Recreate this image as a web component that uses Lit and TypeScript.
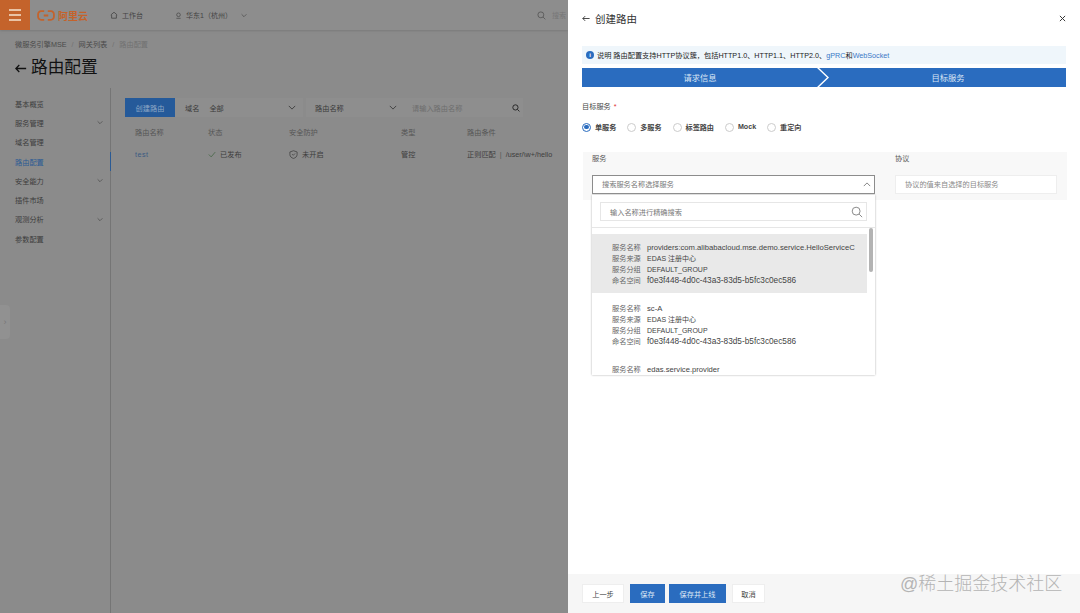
import { LitElement, css, html, svg } from 'lit'
import { customElement } from 'lit/decorators.js'

const chevron = (up = false) => html`<svg class="chev" viewBox="0 0 10 6" width="8" height="5">
  <path d=${up ? 'M1 5l4-4 4 4' : 'M1 1l4 4 4-4'} fill="none" stroke="currentColor" stroke-width="1.1" />
</svg>`

const search = (size: number, width: number) => html`<svg viewBox="0 0 14 14" width=${size} height=${size}>
  <circle cx="6" cy="6" r="4.6" fill="none" stroke="currentColor" stroke-width=${width} />
  ${svg`<path d="M9.5 9.5l3.5 3.5" stroke="currentColor" stroke-width=${width} />`}
</svg>`

const navItems = [
  { name: '基本概览' },
  { name: '服务管理', more: true },
  { name: '域名管理' },
  { name: '路由配置', active: true },
  { name: '安全能力', more: true },
  { name: '插件市场' },
  { name: '观测分析', more: true },
  { name: '参数配置' },
]

const services = [
  { name: 'providers:com.alibabacloud.mse.demo.service.HelloServiceC', hover: true },
  { name: 'sc-A' },
]

@customElement('app-root')
export class AppRoot extends LitElement {
  static styles = css`
    :host {
      display: block;
      width: 1080px;
      height: 613px;
      overflow: hidden;
      position: relative;
      font-family: 'Liberation Sans', 'Noto Sans CJK SC', sans-serif;
    }
    .shell { display: flex; height: 613px; }

    /* dimmed console behind the drawer */
    .page { width: 568px; flex: none; background: #8b8b8b; color: #3a3a3a; display: flex; flex-direction: column; position: relative; overflow: hidden; }
    .topbar { height: 30px; flex: none; display: flex; align-items: center; background: #8d8d8d; box-shadow: 0 1px 2px #7a7a7a; font-size: 7px; color: #444; }
    .burger { width: 30px; height: 30px; background: #c4632b; display: flex; flex-direction: column; justify-content: center; gap: 3px; align-items: center; }
    .burger i { width: 12px; height: 2px; background: #e9c3a5; display: block; }
    .logo { margin-left: 7px; display: flex; align-items: center; gap: 3px; color: #c4632b; font-size: 10px; font-weight: 700; width: 73px; }
    .nav-pill { display: flex; align-items: center; gap: 4px; }
    .work { width: 65px; }
    .region { width: 362px; }
    .region .chev { margin-left: 5px; width: 6px; }
    .top-search { display: flex; align-items: center; gap: 6px; color: #555; }
    .top-search span { color: #777; }

    .crumbs { margin: 9px 0 0 15px; font-size: 7.2px; line-height: 11px; color: #4a4a4a; display: flex; gap: 5px; }
    .crumbs .sep, .crumbs .last { color: #717171; }
    .title { margin: 6px 0 0 15px; display: flex; align-items: center; gap: 4px; font-size: 16.7px; line-height: 24px; color: #111; }

    .body { flex: 1; display: flex; margin-top: 8px; }
    .side { width: 110px; flex: none; border-right: 1px solid #757575; padding-top: 6px; }
    .side a { height: 19.3px; padding: 0 7px 0 15px; display: flex; align-items: center; justify-content: space-between; font-size: 7.2px; color: #3c3c3c; position: relative; }
    .side a.active { color: #2a5a94; }
    .side a.active::after { content: ''; position: absolute; right: -1px; top: 0; bottom: 0; width: 1.5px; background: #2a5a94; }
    .side .chev { color: #444; width: 6px; }
    .tab { position: absolute; left: 0; top: 305px; width: 10px; height: 34px; background: #919191; border-radius: 0 4px 4px 0; color: #777; font-size: 9px; display: flex; align-items: center; justify-content: center; }

    .main { flex: 1; padding: 10px 0 0 14px; font-size: 7.2px; }
    .toolbar { display: flex; height: 19px; }
    .primary { width: 50px; background: #255a9a; color: #8fa9c6; display: flex; align-items: center; justify-content: center; }
    .field { background: #8e8e8e; display: flex; align-items: center; justify-content: space-between; box-sizing: border-box; }
    .f-domain { width: 128px; margin-right: 3px; padding: 0 7px 0 10px; }
    .f-domain b { font-weight: 400; margin-right: 10px; }
    .f-name { width: 96px; padding: 0 5px 0 9px; }
    .f-input { width: 121px; padding: 0 3px 0 10px; color: #6d6d6d; }
    .f-input svg { color: #222; }
    .field span { display: flex; }
    .thead, .trow { display: grid; grid-template-columns: 73px 81px 112px 66px auto; padding-left: 10px; align-items: center; }
    .thead { height: 23px; margin-top: 3px; color: #555; }
    .trow { height: 22px; color: #3d3d3d; }
    .trow .link { color: #3a5a82; letter-spacing: .5px; }
    .cell { display: flex; align-items: center; gap: 4px; white-space: nowrap; }
    .cell i { font-style: normal; color: #555; }

    /* drawer */
    .drawer { flex: 1; background: #fff; color: #333; display: flex; flex-direction: column; font-size: 7.2px; }
    .d-head { height: 36px; flex: none; padding: 0 14px; display: flex; align-items: center; justify-content: space-between; font-size: 10.5px; color: #333; }
    .d-head div { display: flex; align-items: center; gap: 5px; }
    .alert { margin: 10px 14px 0; height: 18px; background: #eff6fb; display: flex; align-items: center; gap: 3px; padding-left: 4px; color: #222; font-size: 7.2px; white-space: nowrap; }
    .alert .dot { width: 8px; height: 8px; border-radius: 50%; background: #2a6cbf; color: #fff; font-size: 6px; line-height: 8px; text-align: center; font-weight: 700; }
    .alert em { font-style: normal; color: #3a78c6; }
    .steps { margin: 4px 14px 0; height: 19px; display: flex; background: #2a6cbf; color: #d9e6f5; font-size: 8.3px; position: relative; }
    .steps span { display: flex; align-items: center; justify-content: center; padding-bottom: 1px; box-sizing: border-box; }
    .steps .one { width: 236px; }
    .steps .two { flex: 1; padding-left: 12px; }
    .steps svg { position: absolute; left: 234px; top: 0; }
    .target { margin: 15px 14px 0; line-height: 10px; font-size: 7.2px; color: #444; }
    .target i { color: #d33; font-style: normal; margin-left: 3px; }
    .radios { margin: 10px 14px 0 0; padding-left: 14px; display: flex; height: 10px; align-items: center; font-size: 7.1px; font-weight: 700; color: #444; }
    .radio { display: flex; align-items: center; gap: 4px; margin-right: 11px; }
    .radio u { width: 7px; height: 7px; border: 1px solid #ccc; border-radius: 50%; display: block; }
    .radio.on u { border-color: #2a6cbf; position: relative; }
    .radio.on u::after { content: ''; position: absolute; inset: 1.2px; border-radius: 50%; background: #2a6cbf; }

    .svc { margin: 20px 13px 0 15px; height: 48px; background: #f8f8f8; padding: 0 10px 0 9px; position: relative; display: grid; grid-template-columns: 283px 162px; column-gap: 20px; grid-template-rows: 23px 19px; color: #555; align-items: center; }
    .head { align-self: start; line-height: 14px; }
    .picker { height: 19px; box-sizing: border-box; background: #fff; border: 1px solid #8c8c8c; padding: 0 3px 1px 9px; display: flex; align-items: center; justify-content: space-between; color: #777; }
    .proto { height: 19px; box-sizing: border-box; background: #fff; border: 1px solid #eee; padding: 0 9px 1px; display: flex; align-items: center; color: #888; }
    .drop { position: absolute; left: 9px; top: 43px; width: 283px; height: 180px; box-sizing: border-box; background: #fff; box-shadow: 0 0 2px #aaa; overflow: hidden; z-index: 2; }
    .drop-search { margin: 7px 8px 0; height: 19px; border: 1px solid #e6e6e6; display: flex; align-items: center; justify-content: space-between; padding: 0 3px 0 9px; color: #777; box-sizing: border-box; }
    .drop-search svg { color: #777; }
    .list { margin-top: 6px; border-top: 1px solid #e6e6e6; padding-top: 6px; position: relative; padding-right: 8px; }
    .bar { position: absolute; right: 2px; top: 0; width: 4px; height: 44px; background: #b3b3b3; border-radius: 2px; }
    .item { padding: 7.5px 0 7.5px 20px; margin-bottom: 2px; line-height: 11px; color: #444; }
    .item.hover { background: #e9e9e9; }
    .line { display: flex; gap: 6px; white-space: nowrap; align-items: baseline; font-size: 7.65px; }
    .line b { font-weight: 400; font-size: 7.2px; color: #666; width: 29px; flex: none; }
    .line.group { font-size: 7px; }
    .line.uuid { font-size: 8.25px; }

    .spacer { flex: 1; }
    .d-foot { height: 39px; flex: none; background: #f6f6f6; padding: 0 14px; display: flex; align-items: center; gap: 5px; position: relative; }
    .btn { height: 19px; display: flex; align-items: center; justify-content: center; background: #fff; border: 1px solid #eee; box-sizing: border-box; color: #444; }
    .btn.blue { background: #2a6cbf; border-color: #2a6cbf; color: #dfe9f5; }
    .mark { position: absolute; left: 332px; top: -1px; font-size: 18px; line-height: 22px; color: #b4b4b4; font-weight: 300; white-space: nowrap; }
  `

  render() {
    return html`
      <div class="shell">
        <div class="page">
          <div class="topbar">
            <div class="burger"><i></i><i></i><i></i></div>
            <div class="logo">
              <svg viewBox="0 0 20 12" width="18" height="11">
                <path d="M8 1.2H4.5A3.3 3.3 0 0 0 1.2 4.5v3a3.3 3.3 0 0 0 3.3 3.3H8M12 1.2h3.5a3.3 3.3 0 0 1 3.3 3.3v3a3.3 3.3 0 0 1-3.3 3.3H12M7.5 6h5" fill="none" stroke="#c4632b" stroke-width="2" />
              </svg>
              <span>阿里云</span>
            </div>
            <div class="nav-pill work">
              <svg viewBox="0 0 10 10" width="8" height="8"><path d="M1 5l4-3.5L9 5M2 5v4h6V5" fill="none" stroke="#444" stroke-width="1" /></svg>
              工作台
            </div>
            <div class="nav-pill region">
              <svg viewBox="0 0 10 10" width="7" height="9"><circle cx="5" cy="4" r="2.6" fill="none" stroke="#444" /><path d="M2 9h6" stroke="#444" /></svg>
              华东1（杭州）${chevron()}
            </div>
            <div class="top-search">${search(9, 1.3)}<span>搜索</span></div>
          </div>
          <div class="crumbs"><span>微服务引擎MSE</span><span class="sep">/</span><span>网关列表</span><span class="sep">/</span><span class="last">路由配置</span></div>
          <div class="title">
            <svg viewBox="0 0 14 10" width="12" height="9"><path d="M13 5H1M5 1L1 5l4 4" fill="none" stroke="#111" stroke-width="1.5" /></svg>
            路由配置
          </div>
          <div class="body">
            <div class="side">
              ${navItems.map(
                (n) => html`<a class=${n.active ? 'active' : ''}>${n.name}${n.more ? chevron() : ''}</a>`,
              )}
            </div>
            <div class="main">
              <div class="toolbar">
                <div class="primary">创建路由</div>
                <div class="field f-domain"><span><b>域名</b>全部</span>${chevron()}</div>
                <div class="field f-name">路由名称${chevron()}</div>
                <div class="field f-input">请输入路由名称${search(8, 1.6)}</div>
              </div>
              <div class="thead">
                <div>路由名称</div><div>状态</div><div>安全防护</div><div>类型</div><div>路由条件</div>
              </div>
              <div class="trow">
                <div class="link">test</div>
                <div class="cell">
                  <svg viewBox="0 0 10 8" width="8" height="7"><path d="M1 4l3 3 5-6" fill="none" stroke="#4d6b4d" stroke-width="1.1" /></svg>
                  已发布
                </div>
                <div class="cell">
                  <svg viewBox="0 0 10 10" width="9" height="9"><path d="M5 .8l4 1.4v3C9 7.4 7 8.8 5 9.4 3 8.8 1 7.4 1 5.2v-3zM3.4 4.6l1.3 1.3 2-2" fill="none" stroke="#444" stroke-width=".9" /></svg>
                  未开启
                </div>
                <div>管控</div>
                <div class="cell">正则匹配<i>|</i>/user/\\w+/hello</div>
              </div>
            </div>
          </div>
          <div class="tab">›</div>
        </div>

        <div class="drawer">
          <div class="d-head">
            <div>
              <svg viewBox="0 0 10 8" width="8" height="7"><path d="M9.5 4H1M4 1L1 4l3 3" fill="none" stroke="#333" stroke-width="1.1" /></svg>
              创建路由
            </div>
            <svg viewBox="0 0 8 8" width="7" height="7"><path d="M1 1l6 6M7 1L1 7" stroke="#333" stroke-width="1.1" /></svg>
          </div>
          <div class="alert">
            <span class="dot">i</span>
            <span>说明 路由配置支持HTTP协议簇，包括HTTP1.0、HTTP1.1、HTTP2.0、<em>gPRC</em>和<em>WebSocket</em></span>
          </div>
          <div class="steps">
            <span class="one">请求信息</span>
            <span class="two">目标服务</span>
            <svg viewBox="0 0 14 19" width="14" height="19"><path d="M1 -1l11 10.5L1 20" fill="none" stroke="#fff" stroke-width="1.4" /></svg>
          </div>
          <div class="target">目标服务<i>*</i></div>
          <div class="radios">
            <label class="radio on"><u></u>单服务</label>
            <label class="radio"><u></u>多服务</label>
            <label class="radio"><u></u>标签路由</label>
            <label class="radio"><u></u>Mock</label>
            <label class="radio"><u></u>重定向</label>
          </div>
          <div class="svc">
            <div class="head">服务</div>
            <div class="head">协议</div>
            <div class="picker">搜索服务名称选择服务${chevron(true)}</div>
            <div class="proto">协议的值来自选择的目标服务</div>
            <div class="drop">
              <div class="drop-search">输入名称进行精确搜索${search(12, 1)}</div>
              <div class="list">
                <div class="bar"></div>
                ${services.map(
                  (s) => html`<div class="item ${s.hover ? 'hover' : ''}">
                    <div class="line"><b>服务名称</b>${s.name}</div>
                    <div class="line group"><b>服务来源</b>EDAS 注册中心</div>
                    <div class="line group"><b>服务分组</b>DEFAULT_GROUP</div>
                    <div class="line uuid"><b>命名空间</b>f0e3f448-4d0c-43a3-83d5-b5fc3c0ec586</div>
                  </div>`,
                )}
                <div class="item"><div class="line"><b>服务名称</b>edas.service.provider</div></div>
              </div>
            </div>
          </div>
          <div class="spacer"></div>
          <div class="d-foot">
            <div class="btn" style="width:42px">上一步</div>
            <div class="btn blue" style="width:35px;margin-left:1px">保存</div>
            <div class="btn blue" style="width:57px;margin-left:-1px">保存并上线</div>
            <div class="btn" style="width:33px;margin-left:1px">取消</div>
            <div class="mark">@稀土掘金技术社区</div>
          </div>
        </div>
      </div>
    `
  }
}

declare global {
  interface HTMLElementTagNameMap {
    'app-root': AppRoot
  }
}
